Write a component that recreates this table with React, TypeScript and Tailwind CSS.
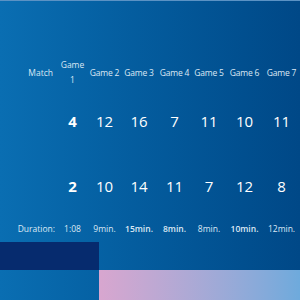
import React from 'react';

const cols = 'grid grid-cols-[57px_31px_33px_36px_35px_34px_37px_37px] items-center';

const headers = ['Game 2', 'Game 3', 'Game 4', 'Game 5', 'Game 6', 'Game 7'];
const rowA = ['12', '16', '7', '11', '10', '11'];
const rowB = ['10', '14', '11', '7', '12', '8'];
const durations = [
  { t: '9min.', b: false },
  { t: '15min.', b: true },
  { t: '8min.', b: true },
  { t: '8min.', b: false },
  { t: '10min.', b: true },
  { t: '12min.', b: false },
];

const ScoreRow: React.FC<{ lead: string; values: string[]; h: string }> = ({ lead, values, h }) => (
  <div className={`${cols} ${h} text-[15px] text-white`}>
    <div />
    <div className="text-center font-bold">{lead}</div>
    {values.map((v, i) => (
      <div key={i} className="text-center">{v}</div>
    ))}
  </div>
);

const App: React.FC = () => {
  return (
    <div
      className="w-[300px] h-[300px] flex flex-col bg-gradient-to-r from-[#0a6eb2] to-[#004887] border-t border-[#5b92c4] overflow-hidden"
      style={{ fontFamily: '"Open Sans", "Noto Sans", sans-serif' }}
    >
      <div className="h-[54px]" />

      {/* Header */}
      <div className={`${cols} h-[34px] text-[8.5px] leading-[15px] text-[#dce8f4]`}>
        <div className="text-right pr-[4px]">Match</div>
        <div className="text-center">Game<br />1</div>
        {headers.map((h) => (
          <div key={h} className="text-center tracking-[-0.2px]">{h}</div>
        ))}
      </div>

      <ScoreRow lead="4" values={rowA} h="h-[64px]" />
      <ScoreRow lead="2" values={rowB} h="h-[66px]" />

      {/* Duration */}
      <div className={`${cols} h-[20px] text-[8.5px] text-[#dce8f4]`}>
        <div className="text-right pr-[2px]">Duration:</div>
        <div className="text-center">1:08</div>
        {durations.map((d, i) => (
          <div key={i} className={`text-center ${d.b ? 'font-semibold' : ''}`}>{d.t}</div>
        ))}
      </div>

      <div className="h-[3px]" />

      {/* Bottom blocks */}
      <div className="flex h-[28px]">
        <div className="w-[99px] bg-[#062b6e]" />
        <div className="flex-1" />
      </div>
      <div className="flex flex-1">
        <div className="w-[99px]" />
        <div className="flex-1 bg-gradient-to-r from-[#d8a6cf] to-[#6eaadc]" />
      </div>
    </div>
  );
};

export default App;
